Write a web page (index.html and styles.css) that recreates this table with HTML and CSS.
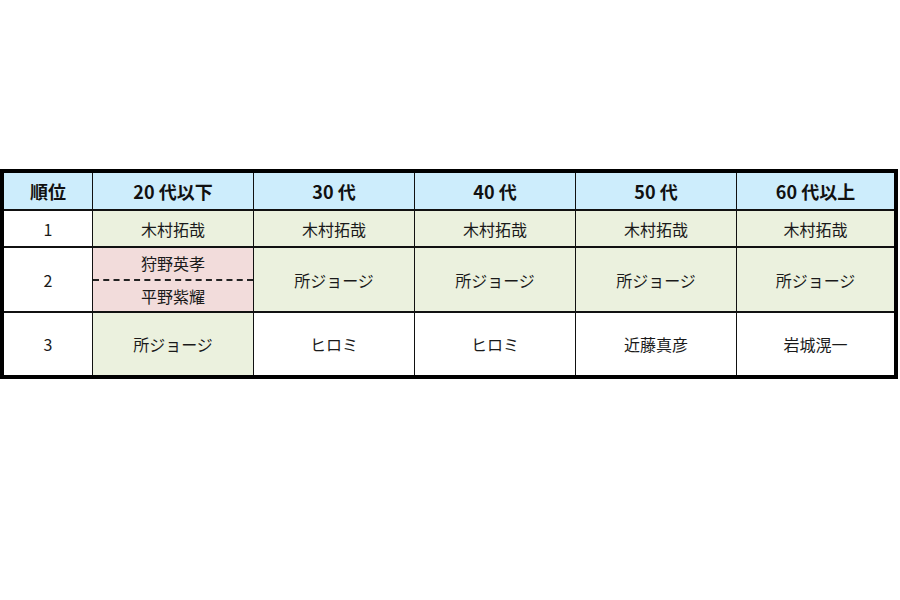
FILE: index.html
```html
<!DOCTYPE html>
<html lang="ja">
<head>
<meta charset="utf-8">
<link rel="stylesheet" href="styles.css">
</head>
<body>
<div class="page">
  <div class="table">
    <div class="cell head">順位</div>
    <div class="cell head">20 代以下</div>
    <div class="cell head">30 代</div>
    <div class="cell head">40 代</div>
    <div class="cell head">50 代</div>
    <div class="cell head">60 代以上</div>

    <div class="cell white">1</div>
    <div class="cell green">木村拓哉</div>
    <div class="cell green">木村拓哉</div>
    <div class="cell green">木村拓哉</div>
    <div class="cell green">木村拓哉</div>
    <div class="cell green">木村拓哉</div>

    <div class="cell white">2</div>
    <div class="cell split">
      <div class="sub pink">狩野英孝</div>
      <div class="sub pink dashed">平野紫耀</div>
    </div>
    <div class="cell green">所ジョージ</div>
    <div class="cell green">所ジョージ</div>
    <div class="cell green">所ジョージ</div>
    <div class="cell green">所ジョージ</div>

    <div class="cell white">3</div>
    <div class="cell green">所ジョージ</div>
    <div class="cell white">ヒロミ</div>
    <div class="cell white">ヒロミ</div>
    <div class="cell white">近藤真彦</div>
    <div class="cell white">岩城滉一</div>
  </div>
</div>
</body>
</html>
```

FILE: styles.css
```css
html, body {
  margin: 0;
  padding: 0;
  background: #ffffff;
}
body {
  font-family: "Noto Sans CJK JP", "Noto Sans", sans-serif;
  color: #1a1a1a;
}
.page {
  width: 900px;
  height: 600px;
  padding-top: 169px;
  box-sizing: border-box;
}
.table {
  width: 898px;
  box-sizing: border-box;
  border: 4px solid #000;
  background: #111;
  display: grid;
  grid-template-columns: 88px 160px 160px 160px 160px 157px;
  grid-template-rows: 36px 35px 63px 62px;
  column-gap: 1px;
  row-gap: 2px;
}
.cell {
  display: flex;
  align-items: center;
  justify-content: center;
  font-size: 16px;
  line-height: 1;
}
.head {
  background: #cdedfc;
  font-weight: bold;
  font-size: 18px;
  color: #111;
}
.white { background: #ffffff; }
.green { background: #ebf1de; }
.split {
  flex-direction: column;
  align-items: stretch;
  background: #f2dcdb;
}
.sub {
  flex: 1;
  display: flex;
  align-items: center;
  justify-content: center;
}
.pink { background: #f2dcdb; }
.dashed {
  border-top: 2px dashed #222;
}
```
